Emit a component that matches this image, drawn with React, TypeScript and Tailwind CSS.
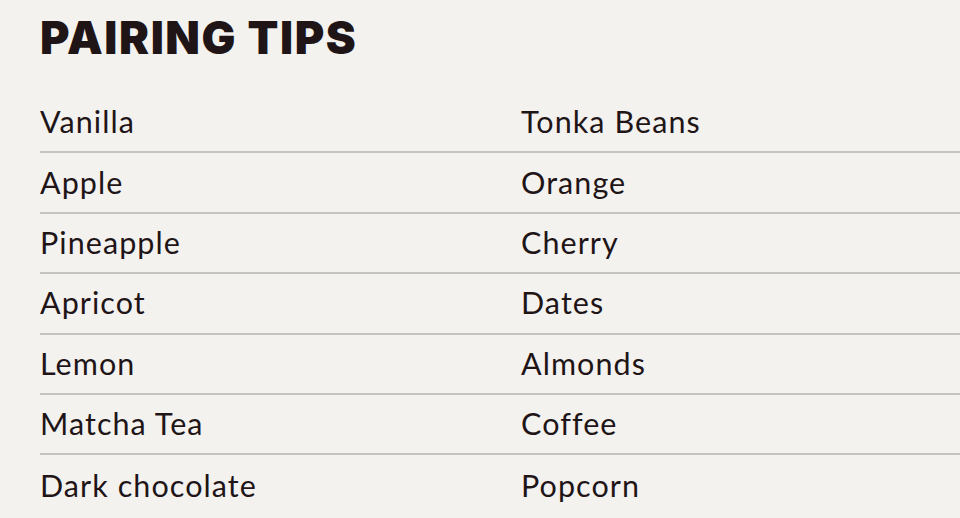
import React from "react";

const rows: [string, string][] = [
  ["Vanilla", "Tonka Beans"],
  ["Apple", "Orange"],
  ["Pineapple", "Cherry"],
  ["Apricot", "Dates"],
  ["Lemon", "Almonds"],
  ["Matcha Tea", "Coffee"],
  ["Dark chocolate", "Popcorn"],
];

export default function App() {
  return (
    <div className="w-[960px] h-[518px] overflow-hidden bg-[#f3f2ef] text-[#1f1517]">
      <div className="pl-[40px] w-[1002px]">
        <h1
          className="text-[45px] leading-none font-black tracking-[0.035em] pt-[15px] h-[93px]"
          style={{ fontFamily: "Inter, 'Liberation Sans', sans-serif" }}
        >
          PAIRING TIPS
        </h1>
        <div style={{ fontFamily: "Lato, 'Noto Sans', sans-serif" }}>
          {rows.map(([a, b], i) => (
            <div
              key={i}
              className="grid grid-cols-[481px_481px] items-center h-[60.4px] border-b-2 border-[#c6c4c0] last:border-b-0 text-[30.5px] tracking-[0.035em]"
            >
              <span>{a}</span>
              <span>{b}</span>
            </div>
          ))}
        </div>
      </div>
    </div>
  );
}
